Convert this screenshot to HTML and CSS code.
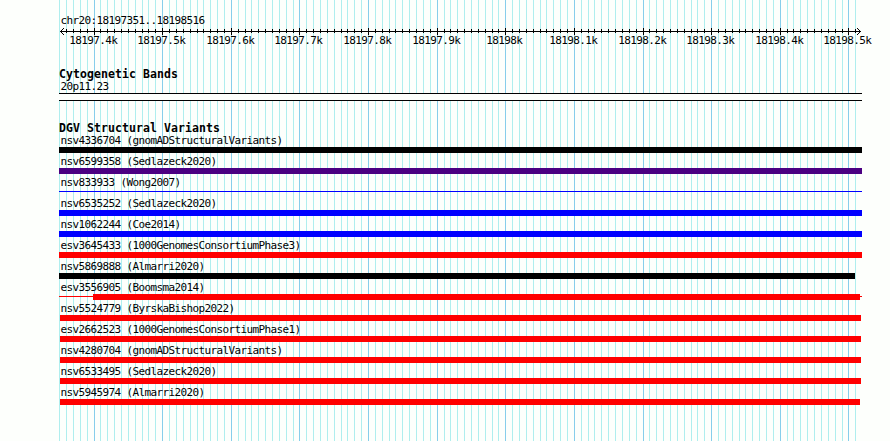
FILE: index.html
```
<!DOCTYPE html>
<html lang="en">
<head>
    <meta charset="UTF-8">
    <title>chr20:18197351..18198516</title>
    <link rel="stylesheet" href="styles.css">
</head>
<body>

    <div class="panel">
        <svg class="grid" width="803" height="441" shape-rendering="crispEdges">
            <path id="gridMinor" class="minor"/>
            <path id="gridMajor" class="major"/>
        </svg>

        <!-- Ruler -->
        <div class="ruler">
            <div class="region">chr20:18197351..18198516</div>
            <svg class="scale" width="830" height="22">
                <g shape-rendering="crispEdges">
                    <path class="axis" d="M1 4.5H802"/>
                    <path id="ticks" class="axis"/>
                </g>
                <path class="axis" d="M5 1L1.5 4.5L5 8M798 1L801.5 4.5L798 8"/>
                <g id="scaleLabels"></g>
            </svg>
        </div>

        <!-- Cytogenetic bands -->
        <div class="track bands">
            <h2>Cytogenetic Bands</h2>
            <div class="label">20p11.23</div>
            <div class="band"></div>
        </div>

        <!-- Structural variants -->
        <div class="track variants">
            <h2>DGV Structural Variants</h2>
            <div class="label">nsv4336704 (gnomADStructuralVariants)</div>
            <div class="bar black"></div>
            <div class="label">nsv6599358 (Sedlazeck2020)</div>
            <div class="bar purple"></div>
            <div class="label">nsv833933 (Wong2007)</div>
            <div class="bar thin"></div>
            <div class="label">nsv6535252 (Sedlazeck2020)</div>
            <div class="bar blue"></div>
            <div class="label">nsv1062244 (Coe2014)</div>
            <div class="bar blue"></div>
            <div class="label">esv3645433 (1000GenomesConsortiumPhase3)</div>
            <div class="bar red"></div>
            <div class="label">nsv5869888 (Almarri2020)</div>
            <div class="bar black short"></div>
            <div class="label">esv3556905 (Boomsma2014)</div>
            <div class="bar partial"><div class="core"></div></div>
            <div class="label">nsv5524779 (ByrskaBishop2022)</div>
            <div class="bar red inset"></div>
            <div class="label">esv2662523 (1000GenomesConsortiumPhase1)</div>
            <div class="bar red inset"></div>
            <div class="label">nsv4280704 (gnomADStructuralVariants)</div>
            <div class="bar red inset"></div>
            <div class="label">nsv6533495 (Sedlazeck2020)</div>
            <div class="bar red inset"></div>
            <div class="label">nsv5945974 (Almarri2020)</div>
            <div class="bar red inset last"></div>
        </div>
    </div>

    <script src="ruler.js"></script>
</body>
</html>
```

FILE: styles.css
```
body {
    margin: 0;
    background-color: #fdfffc;
    color: #000;
    font-family: "DejaVu Sans Mono", monospace;
    font-size: 11px;
    line-height: 12px;
    letter-spacing: -0.622px;
}

.panel {
    position: relative;
    width: 803px;
    height: 441px;
    margin-left: 59px;
    white-space: nowrap;
}

.grid {
    position: absolute;
    top: 0;
    left: 0;
    z-index: -1;
}

.grid path {
    fill: none;
}

.minor {
    stroke: #afeeee;
}

.major {
    stroke: #87ceeb;
}

.ruler {
    padding-top: 15px;
}

.region,
.label {
    height: 12px;
    padding-left: 1.4px;
}

.scale {
    display: block;
    overflow: visible;
}

.axis {
    fill: none;
    stroke: #000;
}

.track h2 {
    height: 12px;
    margin: 0;
    font-size: 11.5px;
    line-height: 10px;
    font-weight: bold;
    letter-spacing: 0.077px;
}

.bands {
    padding-top: 20px;
}

.band {
    height: 6px;
    background: #fdfffc;
    border-top: 1px solid #000;
    border-bottom: 1px solid #000;
}

.variants {
    padding-top: 22px;
}

.bar {
    height: 6px;
    margin-bottom: 3px;
}

.black {
    background: #000;
}

.purple {
    background: #4b0082;
}

.blue {
    background: #0000ff;
}

.red {
    background: #ff0000;
}

.thin {
    background: linear-gradient(#0000ff, #0000ff) 0 2px / 100% 1px no-repeat;
}

.short {
    margin-right: 7px;
}

.inset {
    margin-left: 1px;
    margin-right: 1px;
}

.last {
    margin-right: 2px;
}

.partial {
    background: linear-gradient(#ff0000, #ff0000) 0 2px / 100% 1px no-repeat;
}

.core {
    height: 6px;
    margin: 0 2px 0 34px;
    background: #ff0000;
}
```

FILE: ruler.js
```
// one grid line every 10 bp, a major one every 100 bp
const step = 6.8618;
const offset = 0.77;
let minor = '';
let major = '';
let ticks = '';
let labels = '';

for (let i = 0; i <= 116; i++) {
    const x = Math.floor(offset + i * step);
    const mid = x + 0.5;
    if (i % 10 === 5) {
        const text = (181973.5 + i / 10) / 10;
        const label = Number(text.toFixed(1)) + 'k';
        major += 'M' + mid + ' 0V441';
        ticks += 'M' + mid + ' 1V8';
        labels += '<text x="' + (x - label.length * 3 - 0.8) + '" y="17">' + label + '</text>';
    } else {
        minor += 'M' + mid + ' 0V441';
        if (i > 0) {
            ticks += 'M' + mid + ' 2V6';
        }
    }
}

document.getElementById('gridMinor').setAttribute('d', minor);
document.getElementById('gridMajor').setAttribute('d', major);
document.getElementById('ticks').setAttribute('d', ticks);
document.getElementById('scaleLabels').innerHTML = labels;
```
